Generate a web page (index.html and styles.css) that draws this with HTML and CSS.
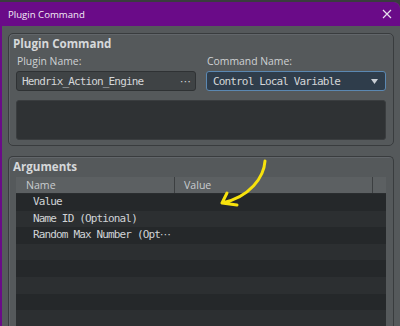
FILE: index.html
```html
<!DOCTYPE html>
<html lang="en">
<head>
    <meta charset="UTF-8">
    <meta name="viewport" content="width=device-width, initial-scale=1.0">
    <title>Plugin Command</title>
    <link rel="stylesheet" href="styles.css">
</head>
<body>
    <div class="window">
        <div class="titlebar">
            <span class="title">Plugin Command</span>
            <svg class="close" width="10" height="10" viewBox="0 0 10 10">
                <path d="M1 1 L9 9 M9 1 L1 9" stroke="#e8e0ee" stroke-width="1.2" fill="none"/>
            </svg>
        </div>

        <div class="content">
            <div class="group">
                <div class="group-title">Plugin Command</div>
                <div class="fields">
                    <div class="field">
                        <div class="label">Plugin Name:</div>
                        <div class="input">
                            <span>Hendrix_Action_Engine</span>
                            <span class="dots">&#8943;</span>
                        </div>
                    </div>
                    <div class="field">
                        <div class="label">Command Name:</div>
                        <div class="input select">
                            <span>Control Local Variable</span>
                            <svg class="arrow" width="7" height="5" viewBox="0 0 7 5">
                                <path d="M0 0 L7 0 L3.5 5 Z" fill="#c9ced4"/>
                            </svg>
                        </div>
                    </div>
                </div>
                <div class="description"></div>
            </div>

            <div class="group args">
                <div class="group-title">Arguments</div>
                <div class="table">
                    <div class="thead">
                        <div class="th col-name">Name</div>
                        <div class="th col-value">Value</div>
                        <div class="th col-end"></div>
                    </div>
                    <div class="row"><span>Value</span></div>
                    <div class="row"><span>Name ID (Optional)</span></div>
                    <div class="row"><span>Random Max Number (Opt</span><span class="more">&#8943;</span></div>
                    <div class="row"></div>
                    <div class="row"></div>
                    <div class="row"></div>
                    <div class="row"></div>
                    <div class="row"></div>
                </div>
            </div>
        </div>
    </div>

    <!-- hand drawn annotation pointing at the Value column -->
    <svg class="annotation" width="400" height="326" viewBox="0 0 400 326">
        <path d="M265 161 C264 177 250 197 222 203 M222 203 L227 193 M222 203 L237 205"
              stroke="#f7e20c" stroke-width="3" fill="none" stroke-linecap="round" stroke-linejoin="round"/>
    </svg>
</body>
</html>
```

FILE: styles.css
```css
body {
    margin: 0;
    background-color: #3a3c3e;
    font-family: 'Open Sans', 'Noto Sans', sans-serif;
    color: #d2d4d6;
    overflow: hidden;
}
.window {
    margin-top: 2px;
    height: 324px;
    background-color: #55595b;
    border-left: 2px solid #6a0b88;
    border-top-right-radius: 6px;
    overflow: hidden;
}
.titlebar {
    height: 24px;
    background-color: #6a0b88;
    display: flex;
    align-items: center;
    justify-content: space-between;
    padding: 0 8px 0 6px;
    border-top-right-radius: 6px;
}
.title {
    color: #f4eef6;
    font-size: 9.6px;
}
.close {
    display: block;
}
.content {
    padding: 7px 6px 0 6px;
    display: flex;
    flex-direction: column;
    gap: 10px;
}
.group {
    border: 1px solid #393c3e;
    border-radius: 5px;
    padding: 2px 7px 5px 7px;
    box-shadow: inset 1px 1px 0 #62666a;
}
.group-title {
    font-weight: bold;
    font-size: 11.6px;
    margin-left: -3px;
    line-height: 16px;
    color: #d6d8da;
}
.fields {
    display: grid;
    grid-template-columns: 1fr 1fr;
    gap: 10px;
    margin-top: 1px;
}
.label {
    font-size: 10.4px;
    line-height: 16px;
    margin-left: 1px;
    color: #cfd2d4;
}
.input {
    height: 18px;
    margin-top: 2px;
    background-color: #3f4345;
    border: 1px solid #2f3234;
    border-radius: 3px;
    display: flex;
    align-items: center;
    justify-content: space-between;
    padding: 0 4px 0 5px;
    font-family: 'DejaVu Sans Mono', monospace;
    font-size: 11px;
    letter-spacing: -0.85px;
    color: #d4d6d8;
}
.dots {
    letter-spacing: 0;
    font-family: 'DejaVu Sans', sans-serif;
    font-size: 11px;
}
.select {
    background-color: #2f3d4b;
    border-color: #5b88b2;
    padding-left: 6px;
    padding-right: 7px;
}
.arrow {
    display: block;
}
.description {
    margin-top: 9px;
    height: 38px;
    background-color: #2f3234;
    border: 1px solid #3a3d3f;
    border-radius: 3px;
}
.args {
    padding-top: 2px;
    padding-bottom: 0;
    border-bottom: none;
    border-bottom-left-radius: 0;
    border-bottom-right-radius: 0;
    height: 180px;
}
.args .group-title {
    margin-bottom: 2px;
}
.table {
    background-color: #25282a;
}
.thead {
    display: flex;
    height: 16px;
    background-color: #5c6062;
    border-bottom: 1px solid #2a2d2f;
    font-size: 10.6px;
    line-height: 16px;
    color: #c9cccf;
}
.th {
    border-right: 1px solid #3c3f41;
}
.col-name {
    width: 148px;
    padding-left: 10px;
}
.col-value {
    flex: 1;
    padding-left: 9px;
}
.col-end {
    width: 13px;
    border-right: none;
}
.row {
    height: 16.6px;
    line-height: 16.6px;
    padding-left: 17px;
    font-family: 'DejaVu Sans Mono', monospace;
    font-size: 11px;
    letter-spacing: -0.85px;
    color: #d0d3d6;
    background-color: #25282a;
}
.row:nth-child(odd) {
    background-color: #2c2f31;
}
.more {
    font-family: 'DejaVu Sans', sans-serif;
    letter-spacing: 0;
}
.annotation {
    position: absolute;
    left: 0;
    top: 0;
    pointer-events: none;
}
```
